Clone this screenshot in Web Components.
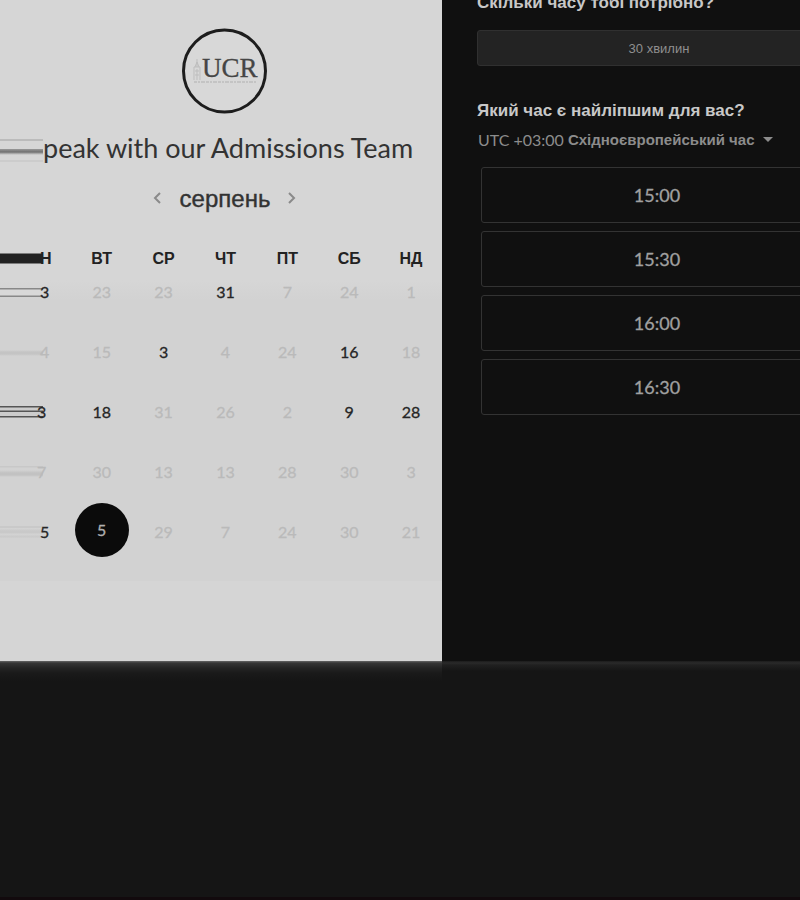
<!DOCTYPE html>
<html lang="uk">
<head>
<meta charset="utf-8">
<meta name="viewport" content="width=device-width, initial-scale=1">
<title>Speak with our Admissions Team</title>
<style>
  html, body { margin: 0; height: 100%; background: #151515; overflow-x: hidden; }
  body { font-family: "Liberation Sans", Arial, sans-serif; }
</style>
</head>
<body>
<booking-page>
  <booking-calendar slot="calendar"></booking-calendar>
  <booking-options slot="options">
    <time-slot>15:00</time-slot>
    <time-slot>15:30</time-slot>
    <time-slot>16:00</time-slot>
    <time-slot>16:30</time-slot>
  </booking-options>
</booking-page>
<script>
class BookingPage extends HTMLElement {
  constructor() {
    super();
    this.attachShadow({ mode: "open" }).innerHTML = `
      <style>
        :host { display: flex; flex-direction: column; min-height: 100vh; box-sizing: border-box; border-bottom: 3px solid #120a0d; overflow: hidden; }
        main { display: grid; grid-template-columns: 442fr 358fr; }
        main > * { min-width: 0; }
        footer { flex: 1; display: grid; grid-template-columns: 442fr 358fr; background: #151515; }
        .glow { height: 20px; background: linear-gradient(#666 0, #363636 2px, #242424 7px, #1a1a1a 12px, #151515); }
        .edge { height: 10px; background: linear-gradient(#1c1c1c 0, #2a2a2a 2px, #202020 4px, #151515); }
      </style>
      <main><slot name="calendar"></slot><slot name="options"></slot></main>
      <footer><div class="glow"></div><div class="edge"></div></footer>`;
  }
}

class UniversityLogo extends HTMLElement {
  constructor() {
    super();
    this.attachShadow({ mode: "open" }).innerHTML = `
      <style>
        :host { display: block; width: 86px; height: 86px; }
        svg { display: block; }
      </style>
      <svg width="86" height="86" viewBox="0 0 86 86" role="img" aria-label="UCR">
        <circle cx="42.500" cy="43" r="41" fill="#d8d8d8" stroke="#1d1d1d" stroke-width="3"/>
        <g fill="none" stroke="#bdbdbd" stroke-width="1">
          <path d="M12 52V39h6v13M15 39v-8M13 39l2-5 2 5M13 43h4M13 47h4M15 41v11"/>
          <path d="M12 54h62" stroke="#c4c4c4" stroke-width="2" stroke-dasharray="3 1 2 1 4 1"/>
        </g>
        <text x="20" y="49" fill="#454545" stroke="#454545" stroke-width=".3" font-family="Liberation Serif, serif" font-size="27">UCR</text>
      </svg>`;
  }
}

class BookingCalendar extends HTMLElement {
  constructor() {
    super();
    const names = ["Н", "ВТ", "СР", "ЧТ", "ПТ", "СБ", "НД"];
    const weeks = [
      [3, 23, 23, 31, 7, 24, 1],
      [4, 15, 3, 4, 24, 16, 18],
      [3, 18, 31, 26, 2, 9, 28],
      [7, 30, 13, 13, 28, 30, 3],
      [5, 5, 29, 7, 24, 30, 21]
    ];
    const open = [[0, 3], [2, 5], [0, 1, 5, 6], [], [0, 1]];
    const body = weeks.map((w, r) => `<tr>${w.map((d, c) => {
      const on = open[r].includes(c);
      const picked = r === 4 && c === 1;
      return `<td><button type="button"${on ? "" : " disabled"}${picked ? ' class="picked" aria-pressed="true"' : ""}>${d}</button></td>`;
    }).join("")}</tr>`).join("");
    this.attachShadow({ mode: "open" }).innerHTML = `
      <style>
        :host { display: block; padding: 28px 0 112px; color: #2b2b2b; overflow: hidden;
          background: linear-gradient(#d6d6d6 0, #d6d6d6 280px, #d2d2d2 300px, #d2d2d2 581px, #d5d5d5 581px); }
        header { display: flex; flex-direction: column; align-items: center; }
        university-logo { margin-left: 8px; }
        .title { display: flex; align-items: center; align-self: stretch; height: 34px; margin-top: 17px; }
        .title i { flex: none; width: 43px; height: 34px;
          background: linear-gradient(#0000 8px, #bbb 8px 10px, #0000 10px 18px, #999 18px, #707070 21px, #bbb 23px, #0000 24px 29px, #ccc 29px 31px, #0000 31px); }
        h1 { margin: 0; font: 400 27px/34px Lato, sans-serif; white-space: nowrap; color: #333; }
        nav { display: flex; align-items: center; gap: 17px; height: 34px; margin: 17px 0 26px 8px; }
        nav button { display: flex; padding: 0; border: 0; background: none; color: #8a8a8a; }
        h2 { margin: 0; font: 400 24px/34px "Liberation Sans", sans-serif; -webkit-text-stroke: 0.4px #333; color: #333; }
        table { width: 100%; table-layout: fixed; border-collapse: collapse; }
        th, td { padding: 0; text-align: center; }
        th:first-child { width: 16%; }
        th { height: 33px; font: 700 16px/33px "Liberation Sans", sans-serif; color: #222; }
        td { padding-top: 26px; }
        tbody tr:first-child td { padding-top: 0; }
        td button { display: block; width: 100%; height: 34px; padding: 0; border: 0; background: none; font: 400 16px/34px Lato, sans-serif; color: #262626; -webkit-text-stroke: 0.3px currentColor; text-align: center; }
        td button:disabled { color: #bababa; }
        td button.picked { width: 54px; height: 54px; margin: -12px auto -8px; border-radius: 50%; background: #0b0b0b; color: #b0b0b0; }
        th:first-child, td:first-child button { box-sizing: border-box; padding-left: 40px; text-align: left; background-size: 43px 34px; background-repeat: no-repeat; }
        th:first-child { background-image: linear-gradient(#0000 11px, #222 12px 21px, #0000 22px); }
        tr:nth-child(1) td:first-child button { background-image: linear-gradient(#0000 13px, #888 13px 14px, #d8d8d8 15px 20px, #888 21px 22px, #0000 22px); }
        tr:nth-child(2) td:first-child button { background-image: linear-gradient(#0000 15px, #c4c4c4 17px 19px, #0000 21px); }
        tr:nth-child(3) td:first-child button { padding-left: 37px;
          background-image: linear-gradient(#0000 11px, #555 11px 12px, #ccc 13px 15px, #555 16px 17px, #ccc 17px 21px, #555 21px 22px, #0000 23px); }
        tr:nth-child(4) td:first-child button { padding-left: 37px; background-image: linear-gradient(#0000 11px, #c8c8c8 11px 12px, #d2d2d2 13px 15px, #c2c2c2 18px 20px, #0000 22px); }
        tr:nth-child(5) td:first-child button { background-image: linear-gradient(#0000 11px, #c9c9c9 11px 13px, #d4d4d4 13px, #c9c9c9 16px 18px, #d4d4d4 19px, #c9c9c9 22px, #0000 23px); }
      </style>
      <header>
        <university-logo></university-logo>
        <div class="title"><i></i><h1>peak with our Admissions Team</h1></div>
        <nav aria-label="Місяць">
          <button type="button" aria-label="Попередній місяць"><svg width="10" height="14" viewBox="0 0 10 14" fill="none" stroke="currentColor" stroke-width="2"><path d="M7 1 2 6l5 5"/></svg></button>
          <h2>серпень</h2>
          <button type="button" aria-label="Наступний місяць"><svg width="10" height="14" viewBox="0 0 10 14" fill="none" stroke="currentColor" stroke-width="2"><path d="m2 1 5 5-5 5"/></svg></button>
        </nav>
      </header>
      <table>
        <thead><tr>${names.map(n => `<th scope="col">${n}</th>`).join("")}</tr></thead>
        <tbody>${body}</tbody>
      </table>`;
  }
}

class BookingOptions extends HTMLElement {
  constructor() {
    super();
    this.attachShadow({ mode: "open" }).innerHTML = `
      <style>
        :host { display: block; background: #101010; color: #c8c8c8; overflow: hidden; }
        .inner { margin: -8px -41px 0 0; padding-left: 35px; }
        h2 { margin: 0; font: 700 17px/22px "Liberation Sans", sans-serif; white-space: nowrap; }
        button { font-family: inherit; }
        .duration { display: block; box-sizing: border-box; width: 100%; height: 36px; margin: 16px 0 34px; padding: 0; border: 1px solid #303030; border-radius: 3px; background: #232323; color: #8f8f8f; font-size: 13px; }
        .zone { display: flex; align-items: center; gap: 4px; height: 24px; margin: 5px 0 16px; padding: 0 0 0 1px; border: 0; background: none; color: #8c8c8c; font-size: 15px; white-space: nowrap; }
        .zone span { font-family: Lato, sans-serif; font-size: 16px; }
        .zone svg { margin-left: 4px; }
        .slots { display: grid; gap: 8px; padding: 0 8px 0 4px; }
      </style>
      <div class="inner">
        <h2>Скільки часу тобі потрібно?</h2>
        <button type="button" class="duration">30 хвилин</button>
        <h2>Який час є найліпшим для вас?</h2>
        <button type="button" class="zone"><span>UTC +03:00</span><b>Східноєвропейський час</b><svg width="10" height="5" viewBox="0 0 8 4" fill="currentColor"><path d="M0 0h8L4 4z"/></svg></button>
        <div class="slots"><slot></slot></div>
      </div>`;
  }
}

class TimeSlot extends HTMLElement {
  constructor() {
    super();
    this.attachShadow({ mode: "open" }).innerHTML = `
      <style>
        :host { display: block; }
        button { display: block; width: 100%; height: 56px; padding: 0; border: 1px solid #333; border-radius: 3px; background: #101010; color: #a0a0a0; font: 400 18px/24px Lato, sans-serif; -webkit-text-stroke: 0.3px currentColor; }
      </style>
      <button type="button"><slot></slot></button>`;
  }
}

customElements.define("university-logo", UniversityLogo);
customElements.define("booking-calendar", BookingCalendar);
customElements.define("time-slot", TimeSlot);
customElements.define("booking-options", BookingOptions);
customElements.define("booking-page", BookingPage);
</script>
</body>
</html>
